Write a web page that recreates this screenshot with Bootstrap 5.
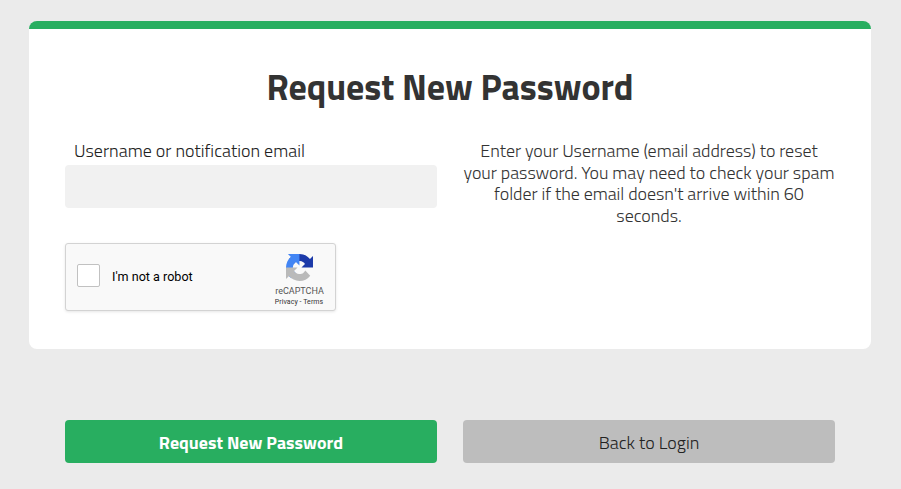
<!DOCTYPE html>
<html lang="en">
<head>
<meta charset="utf-8">
<meta name="viewport" content="width=device-width, initial-scale=1">
<title>Request New Password</title>
<link href="https://cdn.jsdelivr.net/npm/bootstrap@5.3.0/dist/css/bootstrap.min.css" rel="stylesheet">
<style>
body{background:#ebebeb;color:#333;font-family:"Titillium Web",Roboto,"Liberation Sans",sans-serif;font-size:18px;line-height:21.6px;font-weight:300}
.page{width:842px;margin-left:29px;padding-top:21px}
.panel{height:328px;border:0;border-top:8px solid #28ae60;border-radius:8px;padding:35px 36px 0}
.title{font-size:36px;line-height:46px;font-weight:700;letter-spacing:-.08px;margin-bottom:30px}
.pair{display:grid;grid-template-columns:372px 372px;column-gap:26px}
.field-label{padding-left:9px;margin-bottom:3px;color:#222;letter-spacing:.02px}
.field{height:43px;background:#f1f1f1;border:0;border-radius:4px}
.hint{letter-spacing:-.04px}
.captcha{width:271px;height:68px;margin-top:35px;background:#f9f9f9;border:1px solid #d3d3d3;border-radius:3px;box-shadow:0 1px 3px rgba(0,0,0,.1);font-family:Roboto,sans-serif;font-weight:400;padding:0 10px 0 11px}
.captcha .tick{width:23px;height:23px;margin:-2px 12px 0 0;border:1px solid #c1c1c1;border-radius:2px;background:#fff}
.robot{font-size:12.6px;line-height:15px;color:#000}
.brand{width:52px;color:#555;padding-top:10px}
.brand-name{font-size:9px;line-height:10px;margin-top:5px;padding-left:1px}
.brand-links{font-size:7px;line-height:10px;margin-top:1px;color:#333;letter-spacing:.05px}
.actions{margin:71px 0 0 36px}
.action{height:43px;border:0;border-radius:4px;padding:3px 0 0;font-size:18px;line-height:20px}
.action-main,.action-main:hover{background:#28ae60;color:#fff;font-weight:700}
.action-back,.action-back:hover{background:#bdbdbd;color:#222;font-weight:300}
</style>
<script src="https://cdn.jsdelivr.net/npm/bootstrap@5.3.0/dist/js/bootstrap.bundle.min.js"></script>
</head>
<body>
<main class="page">
  <section class="card panel">
    <h1 class="title text-center">Request New Password</h1>
    <div class="pair">
      <div>
        <label class="field-label d-block" for="user">Username or notification email</label>
        <input class="form-control field" id="user" type="text">
        <div class="captcha d-flex justify-content-between">
          <div class="d-flex align-items-center">
            <input class="form-check-input tick" type="checkbox" id="robot">
            <label class="robot" for="robot">I'm not a robot</label>
          </div>
          <div class="brand d-flex flex-column align-items-center text-nowrap">
            <svg width="27" height="27" viewBox="0 0 64 64" aria-hidden="true">
              <path fill="#1c3aa9" d="M64 31.955l-.033-1.37V4.687l-7.16 7.16C50.948 4.674 42.033.093 32.05.093c-10.4 0-19.622 4.96-25.458 12.64l11.736 11.86a15.55 15.55 0 0 1 4.754-5.334c2.05-1.6 4.952-2.906 8.968-2.906.485 0 .86.057 1.135.163 4.976.393 9.288 3.14 11.828 7.124l-8.307 8.307L64 31.953"/>
              <path fill="#4285f4" d="M31.862.094l-1.37.033H4.594l7.16 7.16C4.58 13.147 0 22.06 0 32.046c0 10.4 4.96 19.622 12.64 25.458L24.5 45.768a15.55 15.55 0 0 1-5.334-4.754c-1.6-2.05-2.906-4.952-2.906-8.968 0-.485.057-.86.163-1.135.393-4.976 3.14-9.288 7.124-11.828l8.307 8.307L31.86.095"/>
              <path fill="#bababa" d="M.001 32.045l.033 1.37v25.898l7.16-7.16c5.86 7.173 14.774 11.754 24.76 11.754 10.4 0 19.622-4.96 25.458-12.64l-11.736-11.86a15.55 15.55 0 0 1-4.754 5.334c-2.05 1.6-4.952 2.906-8.968 2.906-.485 0-.86-.057-1.135-.163-4.976-.393-9.288-3.14-11.828-7.124l8.307-8.307c-10.522.04-22.4.066-27.295-.005"/>
            </svg>
            <div class="brand-name">reCAPTCHA</div>
            <div class="brand-links">Privacy - Terms</div>
          </div>
        </div>
      </div>
      <p class="hint text-center mb-0">Enter your Username (email address) to reset your password. You may need to check your spam folder if the email doesn't arrive within 60 seconds.</p>
    </div>
  </section>
  <div class="pair actions">
    <button class="btn action action-main" type="button">Request New Password</button>
    <button class="btn action action-back" type="button">Back to Login</button>
  </div>
</main>
</body>
</html>
